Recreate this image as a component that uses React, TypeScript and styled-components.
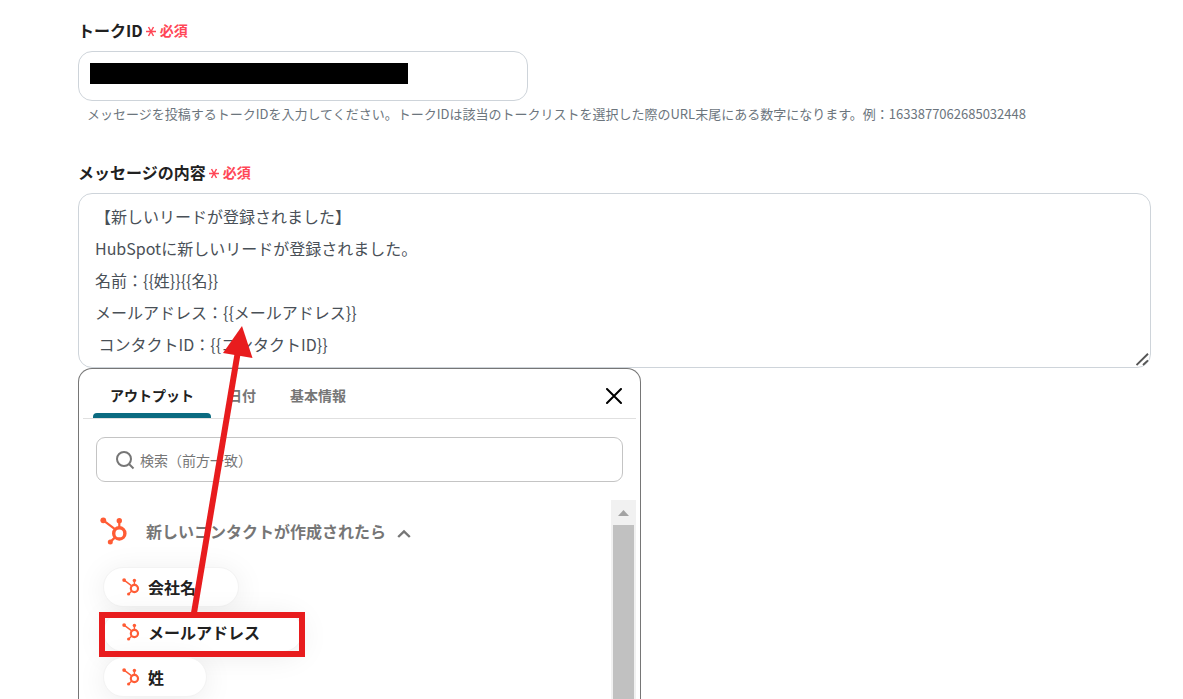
import React from "react";
import styled, { createGlobalStyle } from "styled-components";

const GlobalStyle = createGlobalStyle`
  *, *::before, *::after { box-sizing: border-box; }
  body { margin: 0; background: #fff; }
  body, input, textarea, button {
    font-family: "Noto Sans CJK JP", "Noto Sans", sans-serif;
  }
`;

const Page = styled.main`
  position: relative;
  display: flex;
  flex-direction: column;
  height: 100vh;
  overflow: hidden;
  padding: 18px 32px 0 78px;
`;

const Field = styled.section`
  display: flex;
  flex-direction: column;
  align-items: stretch;
`;

const LabelRow = styled.div`
  display: flex;
  align-items: center;
  height: 24px;
  margin-bottom: 9px;
`;

const Label = styled.label`
  font-size: 16px;
  line-height: 24px;
  font-weight: 700;
  color: #212121;
`;

const Required = styled.span`
  display: flex;
  align-items: center;
  gap: 4px;
  margin-left: 3px;
  font-size: 14px;
  line-height: 24px;
  font-weight: 700;
  color: #ff4757;
`;

const InputWrap = styled.div`
  position: relative;
  width: 450px;
  max-width: 100%;
`;

const TextInput = styled.input`
  display: block;
  width: 100%;
  height: 50px;
  padding: 0 16px;
  border: 1px solid #ced4da;
  border-radius: 14px;
  background: #fff;
  color: #495057;
  font-size: 16px;
  outline: none;
`;

const Redaction = styled.span`
  position: absolute;
  left: 12px;
  top: 12px;
  width: 318px;
  height: 21px;
  background: #000;
`;

const Help = styled.p`
  margin: 3px 0 36px;
  padding-left: 9px;
  font-size: 13px;
  line-height: 20px;
  color: #6c757d;
`;

const AreaWrap = styled.div`
  position: relative;
`;

const TextArea = styled.textarea`
  display: block;
  width: 100%;
  height: 175px;
  padding: 6px 16px;
  border: 1px solid #ced4da;
  border-radius: 14px;
  background: #fff;
  color: #495057;
  font-size: 16px;
  line-height: 32px;
  resize: none;
  overflow: hidden;
  outline: none;
`;

const Grip = styled.svg`
  position: absolute;
  right: 2px;
  bottom: 2px;
`;

const Panel = styled.section`
  display: flex;
  flex-direction: column;
  flex: 1;
  min-height: 0;
  width: 563px;
  max-width: 100%;
  padding: 0 4px;
  border: 1px solid #767676;
  border-bottom: 0;
  border-radius: 14px 14px 0 0;
  background: #fff;
`;

const TabBar = styled.div`
  display: flex;
  flex: none;
  height: 50px;
  padding: 0 10px;
  border-bottom: 1px solid #e0e0e0;
`;

const Tab = styled.button<{ $active?: boolean }>`
  position: relative;
  height: 50px;
  padding: 2px 17px 0;
  border: 0;
  background: none;
  font-size: 14px;
  line-height: 20px;
  font-weight: 700;
  color: ${(p) => (p.$active ? "#212121" : "#767676")};

  &::after {
    content: "";
    display: ${(p) => (p.$active ? "block" : "none")};
    position: absolute;
    left: 0;
    right: 0;
    bottom: 1px;
    height: 5px;
    border-radius: 4px 4px 0 0;
    background: #0b6b81;
  }
`;

const CloseButton = styled.button`
  display: flex;
  align-items: center;
  justify-content: center;
  width: 24px;
  height: 24px;
  margin: 15px 0 0 auto;
  padding: 0;
  border: 0;
  background: none;
`;

const SearchBox = styled.label`
  display: flex;
  flex: none;
  align-items: center;
  gap: 5px;
  height: 45px;
  margin: 18px 13px 18px;
  padding: 0 18px;
  border: 1px solid #c4c4c4;
  border-radius: 9px;
`;

const SearchInput = styled.input`
  flex: 1;
  min-width: 0;
  padding: 0;
  border: 0;
  outline: none;
  background: none;
  font-size: 14px;
  line-height: 20px;
  color: #212121;
  &::placeholder { color: #767676; opacity: 1; }
`;

const Results = styled.div`
  display: flex;
  flex: 1;
  min-height: 0;
`;

const ResultList = styled.div`
  flex: 1;
  padding: 15px 16px 0;
  overflow: hidden;
`;

const GroupToggle = styled.button`
  display: flex;
  align-items: center;
  height: 32px;
  margin-left: 1px;
  padding: 0;
  border: 0;
  background: none;
  font-size: 16px;
  line-height: 24px;
  font-weight: 700;
  color: #767676;
`;

const GroupTitle = styled.span`
  margin: 0 10px 0 18px;
`;

const ChipList = styled.ul`
  display: flex;
  flex-direction: column;
  align-items: flex-start;
  gap: 5px;
  margin: 20px 0 0;
  padding: 0 4px;
  list-style: none;
`;

const Chip = styled.button`
  display: flex;
  align-items: center;
  gap: 8px;
  height: 40px;
  padding: 0 42px 0 18px;
  border: 1px solid #f3f3f3;
  border-radius: 20px;
  background: #fff;
  box-shadow: 0 4px 30px rgba(0, 0, 0, 0.08);
  font-size: 16px;
  line-height: 24px;
  font-weight: 700;
  color: #212121;
`;

const Scrollbar = styled.div`
  display: flex;
  flex-direction: column;
  align-items: center;
  width: 25px;
  background: #f1f1f1;
`;

const ScrollArrow = styled.svg`
  flex: none;
  width: 25px;
  height: 25px;
`;

const ScrollThumb = styled.div`
  flex: 1;
  width: 21px;
  background: #c1c1c1;
`;

const Annotation = styled.svg`
  position: absolute;
  left: 78px;
  top: 320px;
  pointer-events: none;
`;

function HubSpotMark({ size }: { size: number }) {
  return (
    <svg width={size} height={size} viewBox="0 0 28 28" fill="#ff5c35" stroke="#ff5c35" aria-hidden="true">
      <g stroke="none">
        <circle cx="3.3" cy="3.3" r="2.9" />
        <circle cx="19.3" cy="3.7" r="2.7" />
        <circle cx="10.3" cy="24.9" r="2.5" />
      </g>
      <path d="M3.3 3.3 14.6 11.8M19.3 3.7V10M10.3 24.9 14.8 20.6" strokeWidth="2.2" />
      <circle cx="19.3" cy="16.4" r="5.6" fill="none" strokeWidth="3.4" />
    </svg>
  );
}

function RequiredMark() {
  return (
    <Required>
      <svg width="10" height="14" viewBox="0 0 10 14" stroke="#ff4757" strokeWidth="1.5" aria-hidden="true">
        <path d="M0 8.5H10M2.5 4 7.5 13M7.5 4 2.5 13" />
      </svg>
      必須
    </Required>
  );
}

const message = [
  "【新しいリードが登録されました】",
  "HubSpotに新しいリードが登録されました。",
  "名前：{{姓}}{{名}}",
  "メールアドレス：{{メールアドレス}}",
  " コンタクトID：{{コンタクトID}}",
].join("\n");

const outputs = ["会社名", "メールアドレス", "姓"];

export default function App() {
  return (
    <>
      <GlobalStyle />
      <Page>
        <Field>
          <LabelRow>
            <Label htmlFor="talk-id">トークID</Label>
            <RequiredMark />
          </LabelRow>
          <InputWrap>
            <TextInput id="talk-id" type="text" />
            <Redaction />
          </InputWrap>
          <Help>
            メッセージを投稿するトークIDを入力してください。トークIDは該当のトークリストを選択した際のURL末尾にある数字になります。例：1633877062685032448
          </Help>
        </Field>

        <Field>
          <LabelRow>
            <Label htmlFor="message">メッセージの内容</Label>
            <RequiredMark />
          </LabelRow>
          <AreaWrap>
            <TextArea id="message" defaultValue={message} spellCheck={false} />
            <Grip width="13" height="13" viewBox="0 0 13 13" stroke="#555" strokeWidth="1.9" aria-hidden="true">
              <path d="M0.5 12 12 0.8M7 12 12 7.4" />
            </Grip>
          </AreaWrap>
        </Field>

        <Panel>
          <TabBar role="tablist">
            <Tab type="button" role="tab" aria-selected="true" $active>アウトプット</Tab>
            <Tab type="button" role="tab" aria-selected="false">日付</Tab>
            <Tab type="button" role="tab" aria-selected="false">基本情報</Tab>
            <CloseButton type="button" aria-label="閉じる">
              <svg width="16" height="16" viewBox="0 0 16 16" stroke="#000" strokeWidth="2" strokeLinecap="round">
                <path d="M1 1 15 15M15 1 1 15" />
              </svg>
            </CloseButton>
          </TabBar>

          <SearchBox>
            <svg width="20" height="20" viewBox="0 0 20 20" fill="none" stroke="#767676" strokeWidth="2" aria-hidden="true">
              <circle cx="9" cy="9" r="7" />
              <path d="M14 14 18.5 18.5" />
            </svg>
            <SearchInput type="text" placeholder="検索（前方一致）" aria-label="検索" />
          </SearchBox>

          <Results>
            <ResultList>
              <GroupToggle type="button" aria-expanded="true">
                <HubSpotMark size={28} />
                <GroupTitle>新しいコンタクトが作成されたら</GroupTitle>
                <svg width="16" height="16" viewBox="0 0 16 16" fill="none" stroke="#767676" strokeWidth="2.4" aria-hidden="true">
                  <path d="M2.2 14 8 8.4 13.8 14" />
                </svg>
              </GroupToggle>
              <ChipList>
                {outputs.map((name) => (
                  <li key={name}>
                    <Chip type="button">
                      <HubSpotMark size={18} />
                      {name}
                    </Chip>
                  </li>
                ))}
              </ChipList>
            </ResultList>
            <Scrollbar>
              <ScrollArrow viewBox="0 0 25 25" aria-hidden="true">
                <path d="M7 16 12.5 10 18 16Z" fill="#a3a3a3" />
              </ScrollArrow>
              <ScrollThumb />
            </Scrollbar>
          </Results>
        </Panel>

        <Annotation width="240" height="345" viewBox="78 320 240 345" aria-hidden="true">
          <rect x="102" y="615" width="200" height="39" fill="none" stroke="#e81c1e" strokeWidth="6" />
          <path d="M194 613 237.5 354" stroke="#e81c1e" strokeWidth="6" />
          <path d="M242 326 223 353 252.5 358Z" fill="#e81c1e" />
        </Annotation>
      </Page>
    </>
  );
}
